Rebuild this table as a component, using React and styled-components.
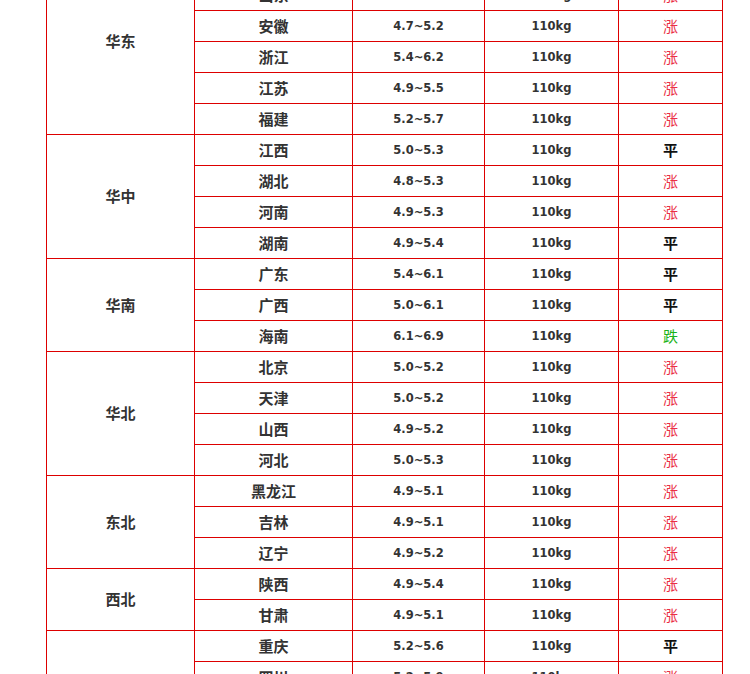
import styled, { createGlobalStyle } from 'styled-components'

const GlobalStyle = createGlobalStyle`
    html, body {
        margin: 0;
        padding: 0;
        background: #fff;
        overflow: hidden;
    }
`

const regions = [
    { name: '华东', rows: [
        ['上海', '5.2~5.8', '涨'],
        ['山东', '4.8~5.3', '涨'],
        ['安徽', '4.7~5.2', '涨'],
        ['浙江', '5.4~6.2', '涨'],
        ['江苏', '4.9~5.5', '涨'],
        ['福建', '5.2~5.7', '涨'],
    ] },
    { name: '华中', rows: [
        ['江西', '5.0~5.3', '平'],
        ['湖北', '4.8~5.3', '涨'],
        ['河南', '4.9~5.3', '涨'],
        ['湖南', '4.9~5.4', '平'],
    ] },
    { name: '华南', rows: [
        ['广东', '5.4~6.1', '平'],
        ['广西', '5.0~6.1', '平'],
        ['海南', '6.1~6.9', '跌'],
    ] },
    { name: '华北', rows: [
        ['北京', '5.0~5.2', '涨'],
        ['天津', '5.0~5.2', '涨'],
        ['山西', '4.9~5.2', '涨'],
        ['河北', '5.0~5.3', '涨'],
    ] },
    { name: '东北', rows: [
        ['黑龙江', '4.9~5.1', '涨'],
        ['吉林', '4.9~5.1', '涨'],
        ['辽宁', '4.9~5.2', '涨'],
    ] },
    { name: '西北', rows: [
        ['陕西', '4.9~5.4', '涨'],
        ['甘肃', '4.9~5.1', '涨'],
    ] },
    { name: '西南', rows: [
        ['重庆', '5.2~5.6', '平'],
        ['四川', '5.2~5.9', '涨'],
        ['贵州', '5.0~5.6', '涨'],
        ['云南', '5.1~5.7', '涨'],
    ] },
]

const trendColors = {
    '涨': '#ea2f45',
    '平': '#111',
    '跌': '#19b319',
}

const App = () => {
    return (
        <Page>
            <GlobalStyle />
            <PriceTable>
                <colgroup>
                    <Col $w={148} />
                    <Col $w={158} />
                    <Col $w={132} />
                    <Col $w={134} />
                    <Col $w={104} />
                </colgroup>
                <tbody>
                    {regions.map(region =>
                        region.rows.map(([province, price, trend], i) => (
                            <tr key={region.name + province}>
                                {i === 0 && (
                                    <RegionCell rowSpan={region.rows.length}>{region.name}</RegionCell>
                                )}
                                <ProvinceCell>{province}</ProvinceCell>
                                <NumCell>{price}</NumCell>
                                <NumCell>110kg</NumCell>
                                <TrendCell $color={trendColors[trend]} $bold={trend === '平'}>
                                    {trend}
                                </TrendCell>
                            </tr>
                        ))
                    )}
                </tbody>
            </PriceTable>
        </Page>
    )
}

export default App

const Page = styled.div`
    padding-left: 46px;
    margin-top: -52px;
`

const PriceTable = styled.table`
    border-collapse: collapse;
    table-layout: fixed;
    width: 677px;

    td {
        border: 1px solid #dd0000;
        height: 28px;
        padding: 0 0 2px;
        text-align: center;
        vertical-align: middle;
    }
`

const Col = styled.col`
    width: ${p => p.$w}px;
`

const RegionCell = styled.td`
    font-family: "Noto Sans CJK SC", sans-serif;
    font-size: 15px;
    font-weight: 700;
    color: #333;
`

const ProvinceCell = styled.td`
    font-family: "Noto Sans CJK SC", sans-serif;
    font-size: 15px;
    font-weight: 700;
    color: #333;
`

const NumCell = styled.td`
    font-family: "DejaVu Sans", Verdana, sans-serif;
    font-size: 11.5px;
    font-weight: 700;
    color: #333;
    && {
        padding: 1px 0;
    }
`

const TrendCell = styled.td`
    font-family: "Noto Sans CJK SC", sans-serif;
    font-size: 15px;
    font-weight: ${p => (p.$bold ? 700 : 400)};
    color: ${p => p.$color};
`
